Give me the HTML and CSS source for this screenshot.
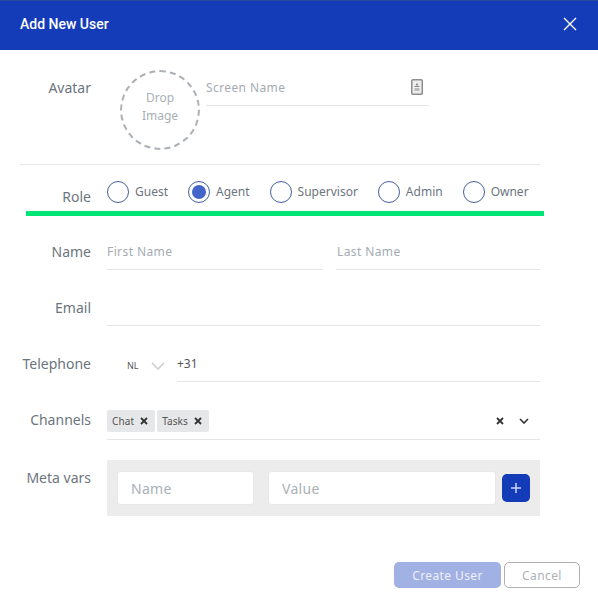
FILE: index.html
```html
<!DOCTYPE html>
<html lang="en">
<head>
<meta charset="utf-8">
<title>Add New User</title>
<link rel="stylesheet" href="styles.css">
</head>
<body>
<div class="modal">
  <header class="head">
    <h1 class="title">Add New User</h1>
    <svg class="close" viewBox="0 0 14 14" width="14" height="14"><path d="M1 1l12 12M13 1L1 13" stroke="#fff" stroke-width="1.4" fill="none"/></svg>
  </header>
  <div class="body">
    <div class="avatar-row">
      <div class="label avatar-label">Avatar</div>
      <div class="drop"><span>Drop<br>Image</span></div>
      <div class="screen">
        <span class="ph">Screen Name</span>
        <svg class="card" viewBox="0 0 12 16" width="12" height="16"><rect x="0.75" y="0.75" width="10.5" height="14.5" rx="1" fill="#eee" stroke="#8d8d8d" stroke-width="1.5"/><path d="M6 3.5l1.4 3H4.6zM3.5 7h5v1h-5z" fill="#8d8d8d"/><path d="M3.5 9h5v3h-5z" fill="#bbb"/></svg>
      </div>
    </div>
    <div class="role-row">
      <div class="label role-label">Role</div>
      <div class="radios">
        <label class="radio"><i class="dot"></i>Guest</label>
        <label class="radio"><i class="dot on"></i>Agent</label>
        <label class="radio"><i class="dot"></i>Supervisor</label>
        <label class="radio"><i class="dot"></i>Admin</label>
        <label class="radio"><i class="dot"></i>Owner</label>
      </div>
      <div class="green"></div>
    </div>
    <div class="row">
      <div class="label">Name</div>
      <div class="field two">
        <div class="line"><span class="ph">First Name</span></div>
        <div class="line"><span class="ph">Last Name</span></div>
      </div>
    </div>
    <div class="row">
      <div class="label">Email</div>
      <div class="field"><div class="line"></div></div>
    </div>
    <div class="row">
      <div class="label">Telephone</div>
      <div class="field tel">
        <div class="country"><span class="cc">NL</span>
          <svg viewBox="0 0 14 8" width="14" height="8"><path d="M1 1l6 6 6-6" fill="none" stroke="#ccc" stroke-width="1.5"/></svg>
        </div>
        <div class="line"><span class="val">+31</span></div>
      </div>
    </div>
    <div class="row">
      <div class="label">Channels</div>
      <div class="field"><div class="line chips">
        <span class="chip">Chat<svg viewBox="0 0 8 8" width="8" height="8"><path d="M1 1l6 6M7 1L1 7" stroke="#333" stroke-width="1.8" fill="none"/></svg></span>
        <span class="chip">Tasks<svg viewBox="0 0 8 8" width="8" height="8"><path d="M1 1l6 6M7 1L1 7" stroke="#333" stroke-width="1.8" fill="none"/></svg></span>
        <span class="ctrls">
          <svg viewBox="0 0 8 8" width="8" height="8"><path d="M1 1l6 6M7 1L1 7" stroke="#333" stroke-width="1.8" fill="none"/></svg>
          <svg viewBox="0 0 10 6" width="10" height="6"><path d="M1 1l4 4 4-4" fill="none" stroke="#333" stroke-width="1.6"/></svg>
        </span>
      </div></div>
    </div>
    <div class="row meta-row">
      <div class="label meta-label">Meta vars</div>
      <div class="meta">
        <div class="box name">Name</div>
        <div class="box value">Value</div>
        <div class="plus"><svg viewBox="0 0 12 12" width="12" height="12"><path d="M6 1v10M1 6h10" stroke="#cdd6f3" stroke-width="1.5"/></svg></div>
      </div>
    </div>
    <div class="actions">
      <button class="btn create">Create User</button>
      <button class="btn cancel">Cancel</button>
    </div>
  </div>
</div>
</body>
</html>
```
FILE: styles.css
```css
* { box-sizing: border-box; }
html, body { margin: 0; padding: 0; background: #fff; }
body { width: 598px; height: 608px; overflow: hidden; font-family: "Noto Sans", sans-serif; color: #6c757d; }
.head { height: 50px; background: #143bb8; border-top: 1px solid #2a4a9e; display: flex; align-items: center; justify-content: space-between; padding: 0 21px 3px 20px; }
.title { margin: 0; font: 500 14px/1 Roboto, sans-serif; color: #fff; }
.body { padding: 0 58px 0 20px; position: relative; }
.label { width: 71px; text-align: right; font-size: 14px; line-height: 20px; color: #6c757d; flex: none; }
.ph { color: #a4abb2; font-size: 12px; letter-spacing: .4px; }
.avatar-row { display: flex; height: 115px; padding-top: 20px; border-bottom: 1px solid #e6e8ea; }
.avatar-label { margin-top: 8px; }
.drop { width: 80px; height: 80px; border: 2px dashed #abb1b6; border-radius: 50%; margin-left: 29px; display: flex; align-items: center; justify-content: center; text-align: center; font-size: 12px; line-height: 18px; color: #a9b0b6; padding-bottom: 6px; }
.screen { width: 223px; height: 36px; margin-left: 6px; border-bottom: 1px solid #e3e5e7; display: flex; justify-content: space-between; align-items: flex-start; padding: 9px 6px 0 0; }
.screen .ph { line-height: 18px; }
.role-row { display: flex; height: 51px; margin-bottom: 20px; position: relative; }
.role-label { margin-top: 22px; }
.radios { display: flex; gap: 20px; margin-left: 16px; padding-top: 16px; }
.radio { display: flex; align-items: flex-start; height: 22px; font-size: 12px; line-height: 21px; color: #6c757d; }
.dot { width: 22px; height: 22px; border-radius: 50%; border: 1.3px solid #45619f; margin-right: 6px; background: #fff; display: block; flex: none; position: relative; }
.dot.on::after { content: ""; position: absolute; left: 2.7px; top: 2.7px; width: 14px; height: 14px; border-radius: 50%; background: #4364c8; }
.green { position: absolute; left: 6px; top: 46px; width: 518px; height: 5px; background: #00e676; }
.row { display: flex; height: 56px; }
.row .label { padding-top: 6px; height: 34px; }
.field { margin-left: 16px; width: 433px; display: flex; }
.line { flex: 1; height: 34px; border-bottom: 1px solid #e3e5e7; display: flex; align-items: center; padding-bottom: 2px; }
.two { gap: 13px; }
.two .line { flex: none; width: 216px; }
.two .line + .line { width: 204px; padding-left: 1px; }
.tel .country { width: 70px; display: flex; align-items: center; padding-left: 20px; height: 34px; }
.cc { font-size: 9px; color: #555; width: 24px; }
.country svg { margin-top: 2px; }
.val { font-size: 12px; color: #555; }
.line.chips { gap: 2px; height: 36px; padding: 6px 0 0; align-items: flex-start; }
.chip { height: 22px; background: #e6e7e8; border-radius: 2px; padding: 0 7px 0 5px; font-size: 10px; letter-spacing: .1px; color: #555; display: flex; align-items: center; gap: 6px; }
.ctrls { margin-left: auto; display: flex; align-items: center; gap: 15px; padding: 7px 11px 0 0; }
.meta-row { height: 102px; }
.row .meta-label { padding-top: 8px; }
.meta { margin-left: 16px; width: 433px; height: 56px; background: #ececed; display: flex; align-items: center; padding-left: 10px; }
.box { height: 34px; background: #fff; border: 1px solid #e6e8ea; border-radius: 3px; font-size: 14px; letter-spacing: .3px; color: #a9b0b6; display: flex; align-items: center; padding-left: 13px; }
.name { width: 137px; margin-right: 14px; }
.value { width: 228px; margin-right: 6px; }
.plus { width: 28px; height: 28px; border-radius: 5px; background: #143bb8; display: flex; align-items: center; justify-content: center; }
.actions { display: flex; justify-content: flex-end; gap: 3px; margin-right: -40px; }
.btn { height: 26px; border-radius: 5px; font: 12px "Noto Sans", sans-serif; letter-spacing: .4px; padding: 0; }
.create { width: 107px; background: #a1b1e3; border: 0; color: #edf0fa; }
.cancel { width: 76px; background: #fff; border: 1px solid #aeb2b6; color: #adb2b7; }
```
